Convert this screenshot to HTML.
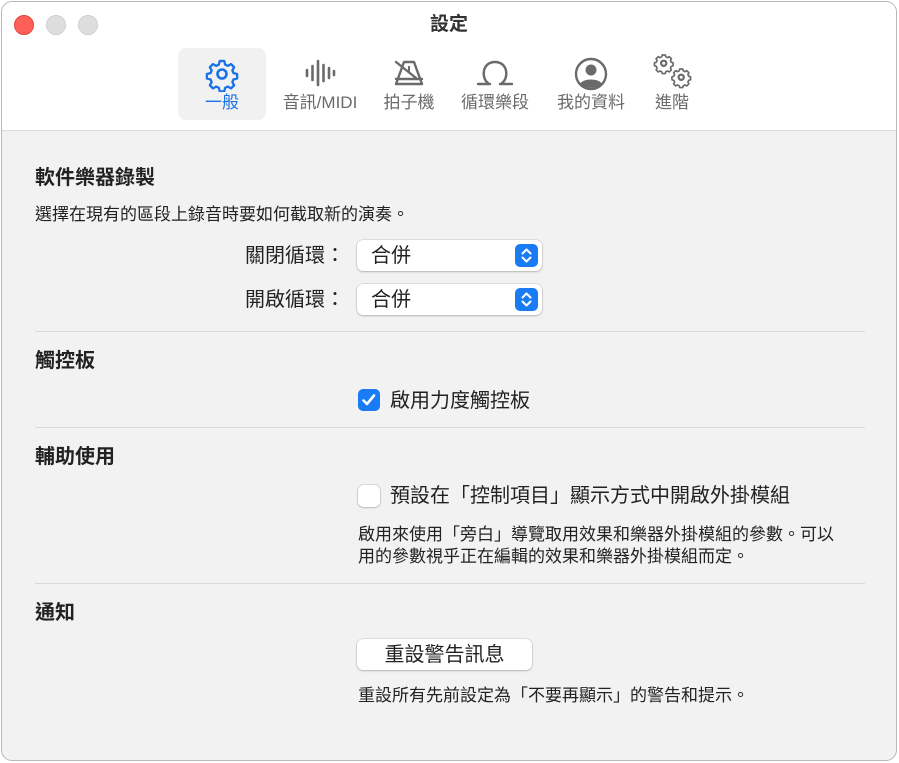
<!DOCTYPE html>
<html><head><meta charset="utf-8"><style>
*{margin:0;padding:0;box-sizing:border-box}
body{width:899px;height:763px;background:#fff;font-family:"Liberation Sans","Noto Sans CJK TC",sans-serif;color:#222;position:relative;overflow:hidden}
.win{position:absolute;left:1px;top:1px;width:896px;height:760px;border:1px solid #b8b8b8;border-radius:11px;background:#f2f2f2;overflow:hidden}
.tb{position:absolute;left:0;top:0;width:100%;height:129px;background:#fff;border-bottom:1px solid #dcdcdc}
.a{position:absolute;white-space:nowrap;line-height:1}
.dot{position:absolute;top:13px;width:20px;height:20px;border-radius:50%}
.item{position:absolute;top:46px;width:88px;height:72px;text-align:center}
.item svg{position:absolute;left:50%;top:8px;transform:translateX(-50%)}
.item span{position:absolute;left:-10px;right:-10px;top:46px;font-size:17px;line-height:1;color:#6a6a6a}
.h{font-size:20px;font-weight:bold;color:#222;left:33px}
.t{font-size:17px;color:#222}
.l{font-size:20px;color:#222}
.pop{position:absolute;left:355px;width:185px;height:31px;background:#fff;border-radius:6px;box-shadow:0 0 0 .5px rgba(0,0,0,.15),0 1px 2px rgba(0,0,0,.2)}
.pop span{position:absolute;left:14px;top:6px;font-size:20px;line-height:1}
.pop i{position:absolute;right:4px;top:4px;width:23px;height:23px;border-radius:5px;background:#1a7cf5}
.hr{position:absolute;left:33px;width:830px;height:1px;background:#d8d8d8}
.cb{position:absolute;left:356px;width:22px;height:22px;border-radius:5px}
</style></head><body>
<div class="win">
<div class="tb"></div>
<div class="dot" style="left:12px;background:#fe5f57;border:1px solid #e0443e"></div>
<div class="dot" style="left:44px;background:#dedede;border:1px solid #cfcfcf"></div>
<div class="dot" style="left:76px;background:#dedede;border:1px solid #cfcfcf"></div>
<div class="a" style="left:0;right:0;top:13px;text-align:center;font-size:19px;font-weight:bold;color:#333">設定</div>

<div class="item" style="left:176px;background:#f1f1f1;border-radius:8px">
<svg width="36" height="36" viewBox="0 0 36 36"><g fill="none" stroke="#1a72e8" stroke-width="2.6" stroke-linejoin="round"><path d="M15.5 3.5h5l1 4 3 1.5 3.5-2 3.5 3.5-2 3.5 1.3 3 4 1v5l-4 1-1.3 3 2 3.5-3.5 3.5-3.5-2-3 1.3-1 4h-5l-1-4-3-1.3-3.5 2-3.5-3.5 2-3.5-1.3-3-4-1v-5l4-1 1.3-3-2-3.5 3.5-3.5 3.5 2 3-1.5z" transform="scale(.9) translate(2,2)"/><circle cx="18" cy="18" r="4.5"/></g></svg>
<span style="color:#1a72e8">一般</span></div>

<div class="item" style="left:273px;width:90px">
<svg width="34" height="34" viewBox="0 0 34 34"><g stroke="#6a6a6a" stroke-width="2.6" stroke-linecap="round"><path d="M4 14v6M9.5 10v14M15 5v24M20.5 9v16M26 12v10M31 15v4"/></g></svg>
<span>音訊/MIDI</span></div>

<div class="item" style="left:363px">
<svg width="34" height="34" viewBox="0 0 34 34"><g fill="none" stroke="#6a6a6a" stroke-width="2.4" stroke-linejoin="round" stroke-linecap="round"><path d="M12 6h10l8 22H4z"/><path d="M4 6l20 16"/><path d="M4 23h26"/></g><path d="M17 10v6" stroke="#6a6a6a" stroke-width="2"/></svg>
<span>拍子機</span></div>

<div class="item" style="left:449px">
<svg width="40" height="34" viewBox="0 0 40 34"><g fill="none" stroke="#6a6a6a" stroke-width="2.4" stroke-linecap="round"><path d="M13 27C6 22 7 6 20 6s14 16 7 21"/><path d="M3 28h12M25 28h12"/></g></svg>
<span>循環樂段</span></div>

<div class="item" style="left:545px">
<svg width="36" height="36" viewBox="0 0 36 36"><circle cx="18" cy="18" r="15" fill="none" stroke="#6a6a6a" stroke-width="2.4"/><circle cx="18" cy="14" r="5.5" fill="#6a6a6a"/><path d="M7 28c3-6 19-6 22 0c-5 5-17 5-22 0z" fill="#6a6a6a"/></svg>
<span>我的資料</span></div>

<div class="item" style="left:626px">
<svg width="46" height="38" viewBox="0 0 46 38" style="top:4px;left:52%"><g fill="none" stroke="#6a6a6a" stroke-width="2.2" stroke-linejoin="round"><path d="M13 4h4l.8 2.5 2.2 1 2.4-1.3 2.8 2.8-1.3 2.4 1 2.2 2.5.8v4l-2.5.8-1 2.2 1.3 2.4-2.8 2.8-2.4-1.3-2.2 1-.8 2.5h-4l-.8-2.5-2.2-1-2.4 1.3-2.8-2.8 1.3-2.4-1-2.2-2.5-.8v-4l2.5-.8 1-2.2-1.3-2.4 2.8-2.8 2.4 1.3 2.2-1z" transform="scale(.75) translate(2,0)"/><circle cx="12.7" cy="11.3" r="2.6"/><path d="M13 4h4l.8 2.5 2.2 1 2.4-1.3 2.8 2.8-1.3 2.4 1 2.2 2.5.8v4l-2.5.8-1 2.2 1.3 2.4-2.8 2.8-2.4-1.3-2.2 1-.8 2.5h-4l-.8-2.5-2.2-1-2.4 1.3-2.8-2.8 1.3-2.4-1-2.2-2.5-.8v-4l2.5-.8 1-2.2-1.3-2.4 2.8-2.8 2.4 1.3 2.2-1z" transform="translate(19,14) scale(.75)"/><circle cx="30.2" cy="25.3" r="2.6"/></g></svg>
<span>進階</span></div>

<div class="a h" style="top:166px">軟件樂器錄製</div>
<div class="a t" style="left:33px;top:204px">選擇在現有的區段上錄音時要如何截取新的演奏。</div>
<div class="a l" style="left:243px;top:244px">關閉循環：</div>
<div class="pop" style="top:238px"><span>合併</span><i><svg width="23" height="23" viewBox="0 0 23 23"><path d="M7.5 9.5l4-4 4 4M7.5 13.5l4 4 4-4" fill="none" stroke="#fff" stroke-width="2" stroke-linecap="round" stroke-linejoin="round"/></svg></i></div>
<div class="a l" style="left:243px;top:288px">開啟循環：</div>
<div class="pop" style="top:282px"><span>合併</span><i><svg width="23" height="23" viewBox="0 0 23 23"><path d="M7.5 9.5l4-4 4 4M7.5 13.5l4 4 4-4" fill="none" stroke="#fff" stroke-width="2" stroke-linecap="round" stroke-linejoin="round"/></svg></i></div>
<div class="hr" style="top:329px"></div>

<div class="a h" style="top:349px">觸控板</div>
<div class="cb" style="top:387px;background:#1a7cf5"><svg width="22" height="22" viewBox="0 0 22 22"><path d="M5.5 11.5l3.5 3.5 7-8.5" fill="none" stroke="#fff" stroke-width="2.6" stroke-linecap="round" stroke-linejoin="round"/></svg></div>
<div class="a l" style="left:388px;top:389px">啟用力度觸控板</div>
<div class="hr" style="top:425px"></div>

<div class="a h" style="top:445px">輔助使用</div>
<div class="cb" style="top:483px;background:#fff;box-shadow:0 0 0 .5px rgba(0,0,0,.2),0 1px 2px rgba(0,0,0,.15)"></div>
<div class="a l" style="left:388px;top:484px">預設在「控制項目」顯示方式中開啟外掛模組</div>
<div class="a t" style="left:356px;top:522px;line-height:22px">啟用來使用「旁白」導覽取用效果和樂器外掛模組的參數。可以<br>用的參數視乎正在編輯的效果和樂器外掛模組而定。</div>
<div class="hr" style="top:581px"></div>

<div class="a h" style="top:601px">通知</div>
<div class="pop" style="top:637px;width:175px;text-align:center"><span style="left:0;right:0">重設警告訊息</span></div>
<div class="a t" style="left:356px;top:685px">重設所有先前設定為「不要再顯示」的警告和提示。</div>
</div>
</body></html>
